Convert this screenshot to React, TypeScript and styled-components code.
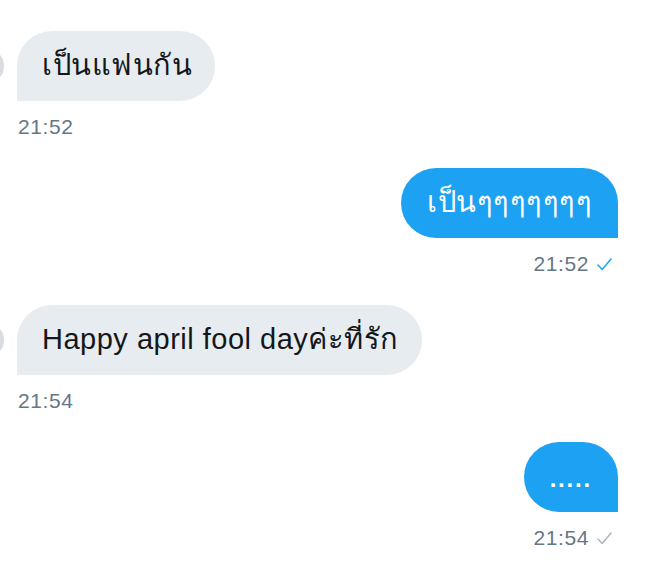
import React from "react";
import styled, { createGlobalStyle } from "styled-components";

const Global = createGlobalStyle`
  html, body { margin: 0; padding: 0; background: #ffffff; }
  body { font-family: "Liberation Sans", "Noto Sans", "DejaVu Sans", sans-serif; }
`;

const Thread = styled.div`
  display: flex;
  flex-direction: column;
  gap: 30px;
  padding: 31px 32px 0 0;
  width: 650px;
  box-sizing: border-box;
`;

const Group = styled.div<{ $mine?: boolean }>`
  display: flex;
  flex-direction: column;
  align-items: ${(p) => (p.$mine ? "flex-end" : "flex-start")};
`;

const Row = styled.div`
  display: flex;
  align-items: center;
`;

const Avatar = styled.div`
  width: 36px;
  height: 36px;
  border-radius: 50%;
  background: #d9dde1;
  margin-left: -32px;
  margin-right: 13px;
  flex: none;
`;

const Bubble = styled.div<{ $mine?: boolean }>`
  box-sizing: border-box;
  height: 70px;
  display: flex;
  align-items: center;
  padding: 0 ${(p) => (p.$mine ? "26px" : "23px")} 2px ${(p) => (p.$mine ? "26px" : "25px")};
  font-size: 29px;
  letter-spacing: 0.5px;
  color: ${(p) => (p.$mine ? "#ffffff" : "#14171a")};
  background: ${(p) => (p.$mine ? "#1da1f2" : "#e6ecf0")};
  border-radius: ${(p) => (p.$mine ? "36px 36px 0 36px" : "36px 36px 36px 0")};
  white-space: nowrap;
`;

const Dots = styled.span`
  font-size: 24px;
  font-weight: 700;
  letter-spacing: 1.8px;
  padding-top: 6px;
`;

const Meta = styled.div<{ $mine?: boolean }>`
  display: flex;
  align-items: center;
  gap: 8px;
  margin-top: 15px;
  height: 22px;
  font-size: 21px;
  letter-spacing: 0.6px;
  color: #657786;
  padding-left: ${(p) => (p.$mine ? "0" : "18px")};
  padding-right: ${(p) => (p.$mine ? "6px" : "0")};
`;

const Check = ({ color }: { color: string }) => (
  <svg width="15" height="13" viewBox="0 0 15 13" fill="none">
    <path d="M1 7 L5.2 11.5 L14 1" stroke={color} strokeWidth="1.5" strokeLinecap="round" strokeLinejoin="round" />
  </svg>
);

type Msg = { text: string; time: string; mine?: boolean; check?: string; dots?: boolean };

const messages: Msg[] = [
  { text: "เป็นแฟนกัน", time: "21:52" },
  { text: "เป็นๆๆๆๆๆๆๆ", time: "21:52", mine: true, check: "#1da1f2" },
  { text: "Happy april fool dayค่ะที่รัก", time: "21:54" },
  { text: ".....", time: "21:54", mine: true, check: "#aab8c2", dots: true },
];

export default function App() {
  return (
    <>
      <Global />
      <Thread>
        {messages.map((m, i) => (
          <Group key={i} $mine={m.mine}>
            <Row>
              {!m.mine && <Avatar />}
              <Bubble $mine={m.mine}>{m.dots ? <Dots>{m.text}</Dots> : m.text}</Bubble>
            </Row>
            <Meta $mine={m.mine}>
              <span>{m.time}</span>
              {m.check && <Check color={m.check} />}
            </Meta>
          </Group>
        ))}
      </Thread>
    </>
  );
}
